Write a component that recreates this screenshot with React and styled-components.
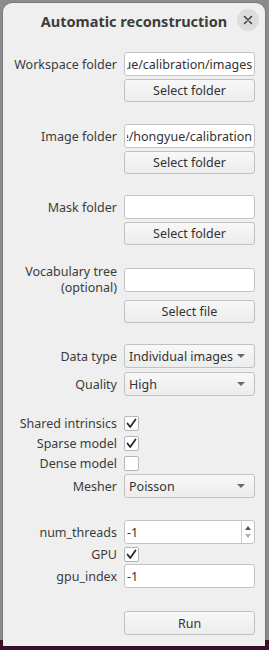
import React, { useEffect, useRef } from 'react';
import styled, { createGlobalStyle } from 'styled-components';

const GlobalStyle = createGlobalStyle`
  html, body {
    margin: 0;
    padding: 0;
  }
  body {
    font-family: "Noto Sans", "DejaVu Sans", sans-serif;
    font-size: 12.5px;
    color: #3c3c3c;
  }
`;

const Desktop = styled.div`
  width: 269px;
  height: 650px;
  overflow: hidden;
  background: linear-gradient(to bottom, #8c8c8c 0, #8c8c8c 640px, #3b0f2e 640px);
  padding: 3px 4px 0 3px;
  box-sizing: border-box;
`;

const Window = styled.div`
  height: 643px;
  background: #efefef;
  border-radius: 9px 9px 0 0;
  box-shadow: 0 0 0 1px rgba(0, 0, 0, 0.12);
  display: flex;
  flex-direction: column;
`;

const TitleBar = styled.div`
  height: 36px;
  display: flex;
  align-items: center;
  justify-content: center;
  position: relative;
`;

const Title = styled.div`
  font-weight: 700;
  font-size: 14.5px;
  color: #3d3d3d;
`;

const CloseButton = styled.div`
  position: absolute;
  right: 6px;
  top: 6px;
  width: 22px;
  height: 22px;
  border-radius: 50%;
  background: #dcdcdc;
  display: flex;
  align-items: center;
  justify-content: center;
`;

const Body = styled.div`
  padding: 13px 10px 0 8px;
  display: flex;
  flex-direction: column;
`;

const Row = styled.div`
  display: grid;
  grid-template-columns: 1fr 131px;
  column-gap: 7px;
  align-items: center;
  min-height: ${p => p.h || 24}px;
  margin-top: ${p => p.gap || 0}px;
`;

const Label = styled.div`
  text-align: right;
  line-height: ${p => p.lh || 15}px;
  white-space: nowrap;
`;

const Field = styled.div`
  height: 24px;
  box-sizing: border-box;
  background: #ffffff;
  border: 1px solid #c3c3c3;
  border-radius: 3px;
  display: flex;
  align-items: center;
  overflow: hidden;
  white-space: nowrap;
  padding: 0 2px;
  color: #333;
  position: relative;
`;

const PathInput = styled.input`
  height: 24px;
  width: 131px;
  box-sizing: border-box;
  background: #ffffff;
  border: 1px solid #c3c3c3;
  border-radius: 3px;
  padding: 0 2px;
  margin: 0;
  font: inherit;
  color: #333;
  outline: none;
`;

const Button = styled.div`
  height: ${p => p.h || 23}px;
  box-sizing: border-box;
  border: 1px solid #c1c1c1;
  border-radius: 3px;
  background: linear-gradient(to bottom, #f8f8f8, #ececec);
  display: flex;
  align-items: center;
  justify-content: center;
  white-space: nowrap;
  color: #333;
`;

const Combo = styled(Button)`
  height: 24px;
  justify-content: space-between;
  padding: 0 9px 0 4px;
`;

const Arrow = styled.div`
  width: 0;
  height: 0;
  border-left: 4px solid transparent;
  border-right: 4px solid transparent;
  border-top: 4px solid #6a6a6a;
`;

const Check = styled.div`
  width: 15px;
  height: 15px;
  box-sizing: border-box;
  background: #fff;
  border: 1px solid #b5b5b5;
  border-radius: 2px;
  display: flex;
  align-items: center;
  justify-content: center;
`;

const SpinArrows = styled.div`
  position: absolute;
  right: 0;
  top: 0;
  bottom: 0;
  width: 12px;
  border-left: 1px solid #d0d0d0;
  display: flex;
  flex-direction: column;
  align-items: center;
  justify-content: center;
  gap: 4px;
`;

const SpinUp = styled.div`
  width: 0;
  height: 0;
  border-left: 3.5px solid transparent;
  border-right: 3.5px solid transparent;
  border-bottom: 4px solid #555;
`;

const SpinDown = styled.div`
  width: 0;
  height: 0;
  border-left: 3.5px solid transparent;
  border-right: 3.5px solid transparent;
  border-top: 4px solid #b0b0b0;
`;

const Tick = () => (
  <svg width="11" height="11" viewBox="0 0 11 11">
    <path d="M1.5 5.5 L4.2 9 L9.5 1.5" fill="none" stroke="#2a2a2a" strokeWidth="1.8" strokeLinecap="round" strokeLinejoin="round" />
  </svg>
);

// path inputs show the tail of the path, like Qt does after a folder is picked
const PathField = ({ value }) => {
  const ref = useRef(null);
  useEffect(() => {
    if (ref.current) ref.current.scrollLeft = ref.current.scrollWidth;
  }, [value]);
  return <PathInput ref={ref} readOnly value={value} />;
};

const CheckRow = ({ label, checked, gap }) => (
  <Row h={19} gap={gap}>
    <Label>{label}</Label>
    <div>
      <Check>{checked && <Tick />}</Check>
    </div>
  </Row>
);

const ButtonRow = ({ text, gap = 3, h }) => (
  <Row h={h || 23} gap={gap}>
    <span />
    <Button h={h}>{text}</Button>
  </Row>
);

export default function App() {
  return (
    <>
      <GlobalStyle />
      <Desktop>
        <Window>
          <TitleBar>
            <Title>Automatic reconstruction</Title>
            <CloseButton>
              <svg width="10" height="10" viewBox="0 0 10 10">
                <path d="M1.5 1.5 L8.5 8.5 M8.5 1.5 L1.5 8.5" stroke="#333" strokeWidth="1.4" strokeLinecap="round" />
              </svg>
            </CloseButton>
          </TitleBar>
          <Body>
            <Row>
              <Label>Workspace folder</Label>
              <PathField value="/home/hongyue/calibration/images" />
            </Row>
            <ButtonRow text="Select folder" />

            <Row gap={22}>
              <Label>Image folder</Label>
              <PathField value="/home/hongyue/calibration" />
            </Row>
            <ButtonRow text="Select folder" />

            <Row gap={21}>
              <Label>Mask folder</Label>
              <PathField value="" />
            </Row>
            <ButtonRow text="Select folder" />

            <Row gap={19} h={32}>
              <Label lh={16}>
                Vocabulary tree
                <br />
                (optional)
              </Label>
              <PathField value="" />
            </Row>
            <ButtonRow text="Select file" gap={4} />

            <Row gap={21} h={24}>
              <Label>Data type</Label>
              <Combo>
                <span>Individual images</span>
                <Arrow />
              </Combo>
            </Row>
            <Row gap={4} h={24}>
              <Label>Quality</Label>
              <Combo>
                <span>High</span>
                <Arrow />
              </Combo>
            </Row>

            <CheckRow label="Shared intrinsics" checked gap={18} />
            <CheckRow label="Sparse model" checked gap={1} />
            <CheckRow label="Dense model" gap={1} />
            <Row gap={1} h={24}>
              <Label>Mesher</Label>
              <Combo>
                <span>Poisson</span>
                <Arrow />
              </Combo>
            </Row>

            <Row gap={22}>
              <Label>num_threads</Label>
              <Field>
                -1
                <SpinArrows>
                  <SpinUp />
                  <SpinDown />
                </SpinArrows>
              </Field>
            </Row>
            <CheckRow label="GPU" checked gap={1} />
            <Row gap={0}>
              <Label>gpu_index</Label>
              <Field>-1</Field>
            </Row>

            <ButtonRow text="Run" gap={23} h={24} />
          </Body>
        </Window>
      </Desktop>
    </>
  );
}
